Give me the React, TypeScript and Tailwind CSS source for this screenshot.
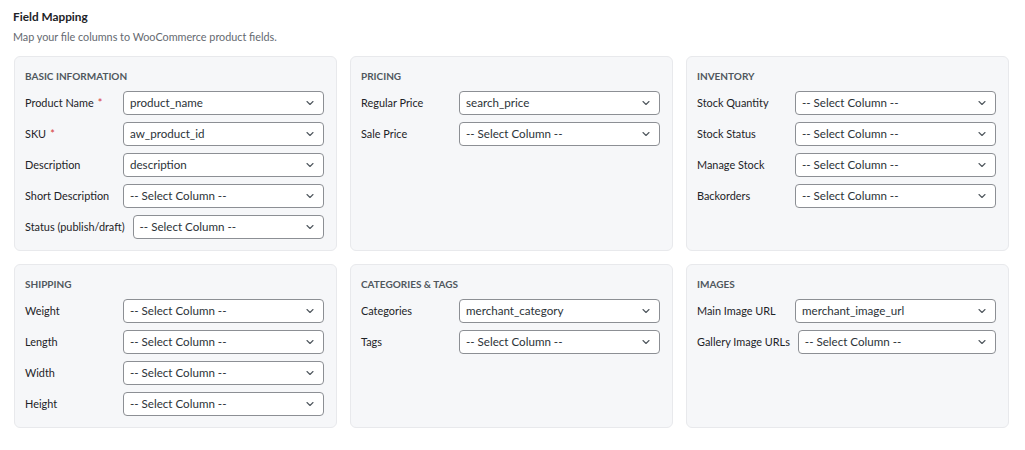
import { ChevronDown } from 'lucide-react'

interface Field {
  label: string
  value?: string
  required?: boolean
}

interface Section {
  title: string
  fields: Field[]
}

const sections: Section[] = [
  {
    title: 'Basic Information',
    fields: [
      { label: 'Product Name', value: 'product_name', required: true },
      { label: 'SKU', value: 'aw_product_id', required: true },
      { label: 'Description', value: 'description' },
      { label: 'Short Description' },
      { label: 'Status (publish/draft)' },
    ],
  },
  {
    title: 'Pricing',
    fields: [{ label: 'Regular Price', value: 'search_price' }, { label: 'Sale Price' }],
  },
  {
    title: 'Inventory',
    fields: [
      { label: 'Stock Quantity' },
      { label: 'Stock Status' },
      { label: 'Manage Stock' },
      { label: 'Backorders' },
    ],
  },
  {
    title: 'Shipping',
    fields: [{ label: 'Weight' }, { label: 'Length' }, { label: 'Width' }, { label: 'Height' }],
  },
  {
    title: 'Categories & Tags',
    fields: [{ label: 'Categories', value: 'merchant_category' }, { label: 'Tags' }],
  },
  {
    title: 'Images',
    fields: [{ label: 'Main Image URL', value: 'merchant_image_url' }, { label: 'Gallery Image URLs' }],
  },
]

function FakeSelect({ value }: { value?: string }) {
  return (
    <div className="flex-1 h-6 flex items-center justify-between bg-white border border-[#8c8f94] rounded-[4px] pl-[6px] pr-[7px] text-[11.6px] text-[#2c3338]">
      <span>{value ?? '-- Select Column --'}</span>
      <ChevronDown size={12} strokeWidth={2.2} className="text-[#50575e]" />
    </div>
  )
}

export default function App() {
  return (
    <div
      className="w-[1025px] h-[450px] bg-white pl-[14px] pr-4 pt-[9px]"
      style={{ fontFamily: 'Lato, "Noto Sans", "Liberation Sans", sans-serif' }}
    >
      <h2 className="text-[11.8px] font-bold text-[#1d2327] leading-4 -ml-px">Field Mapping</h2>
      <p className="text-[10.8px] text-[#646970] mt-1 leading-4 -ml-px">
        Map your file columns to WooCommerce product fields.
      </p>

      <div className="grid grid-cols-3 gap-x-[13px] gap-y-[13px] mt-[11px]">
        {sections.map((s) => (
          <div
            key={s.title}
            className="bg-[#f6f7f9] border border-[#e8e9ec] rounded-md pl-[10px] pr-3 pt-3 pb-[11px]"
          >
            <div className="text-[10px] font-bold uppercase text-[#50575e] leading-[14px] mb-2">
              {s.title}
            </div>
            <div className="flex flex-col gap-[7px]">
              {s.fields.map((f) => (
                <div key={f.label} className="flex items-center gap-2">
                  <label className="min-w-[90px] text-[10.9px] text-[#1d2327] whitespace-nowrap">
                    {f.label}
                    {f.required && <span className="text-[#d63638] ml-1">*</span>}
                  </label>
                  <FakeSelect value={f.value} />
                </div>
              ))}
            </div>
          </div>
        ))}
      </div>
    </div>
  )
}
